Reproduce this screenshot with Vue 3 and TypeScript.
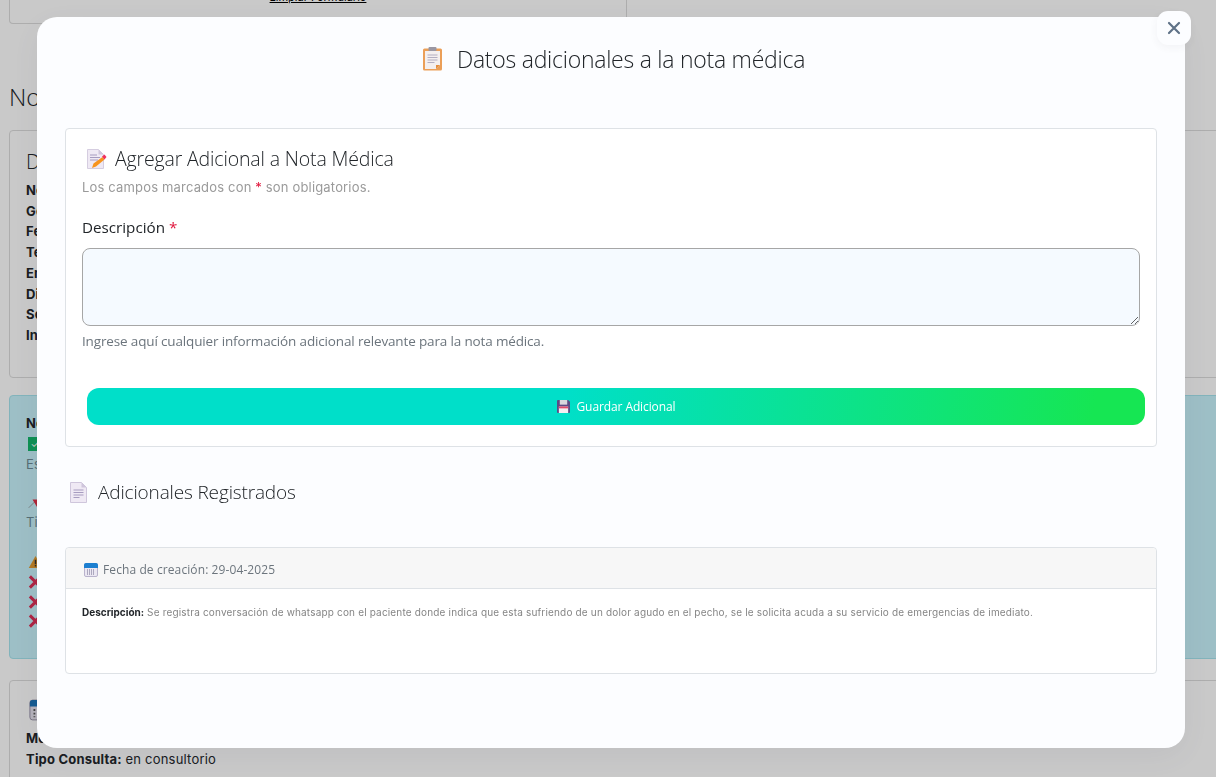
<template>
  <div class="page">
    <!-- pagina detras del modal -->
    <div class="top-row">
      <div class="top-card"><a class="clear-link">Limpiar Formulario</a></div>
    </div>
    <h2 class="page-title">Nota</h2>
    <section class="bg-card patient">
      <h3>Datos</h3>
      <p v-for="row in patientRows" :key="row"><b>{{ row }}</b></p>
    </section>
    <section class="bg-card alert-card">
      <p><b>Nota</b></p>
      <p class="check"><span class="check-box">✓</span></p>
      <p class="soft">Estado</p>
      <svg class="pin" viewBox="0 0 20 20"><path d="M1 19 9 11" stroke="#8a8a8a" stroke-width="1" /><path d="M6 8 13 8 17 1 19 12 12 18Z" fill="#dd2e44" /></svg>
      <p class="soft">Tipo</p>
      <svg class="warn" viewBox="0 0 20 18"><path d="M10 1 19 17H1Z" fill="#e39a2d" /><rect x="9" y="6" width="2" height="6" fill="#333" /><rect x="9" y="13" width="2" height="2" fill="#333" /></svg>
      <svg v-for="n in 3" :key="n" class="cross" viewBox="0 0 16 16"><path d="M2 2 14 14M14 2 2 14" stroke="#dd2e55" stroke-width="3.200" /></svg>
    </section>
    <section class="bg-card consult">
      <svg class="bg-cal" viewBox="0 0 20 24"><rect x="1" y="1" width="18" height="22" rx="3" fill="#e6e3ee" stroke="#8f8aa0" /><path d="M1 8V4a3 3 0 0 1 3-3h12a3 3 0 0 1 3 3v4Z" fill="#1a73b8" /><path d="M6 11v9" stroke="#555" stroke-width="2" stroke-dasharray="2 2" /></svg>
      <p><b>Motivo:</b> consulta</p>
      <p><b>Tipo Consulta:</b> en consultorio</p>
    </section>
  </div>

  <div class="overlay">
    <div class="modal">
      <button class="close" aria-label="Cerrar">
        <svg viewBox="0 0 14 14" width="14" height="14"><path d="M2 2 12 12M12 2 2 12" stroke="#5f7287" stroke-width="2.200" stroke-linecap="round" /></svg>
      </button>

      <h2 class="modal-title">
        <svg class="ico-clip" viewBox="0 0 20 24">
          <rect x="0.500" y="1.500" width="19" height="22" rx="1.500" fill="#eb9f58" />
          <path d="M2.500 4h15v14l-4 4h-11Z" fill="#f4efef" />
          <path d="M17.500 18h-4v4Z" fill="#e58d3c" />
          <rect x="6" y="0" width="8" height="4" rx="1" fill="#9a97a3" />
          <path d="M5 8h10M5 10.500h10M5 13h10M5 15.500h7" stroke="#b3aec2" stroke-width="1" />
        </svg>
        Datos adicionales a la nota médica
      </h2>

      <form class="add-card" @submit.prevent>
        <h3 class="card-title">
          <svg class="ico-memo" viewBox="0 0 20 20">
            <path d="M0.500 0.500h11l5 5v14h-16Z" fill="#efe9f4" stroke="#d5cde0" />
            <path d="M11.500 0.500v5h5Z" fill="#cfc6dc" />
            <path d="M3 6h7M3 8.500h10M3 11h8" stroke="#a79cc0" stroke-width="1" />
            <path d="M5 19 6.500 14.500 15.500 8 17.500 10.500 9 17.500Z" fill="#f7941e" />
            <path d="M15 7.500 17.500 5.500 19.500 8 17.500 10.500Z" fill="#f0315f" />
          </svg>
          Agregar Adicional a Nota Médica
        </h3>
        <p class="required-note">Los campos marcados con <span class="req">*</span> son obligatorios.</p>
        <label class="field-label" for="descripcion">Descripción <span class="req">*</span></label>
        <textarea id="descripcion" v-model="descripcion" class="field"></textarea>
        <p class="help">Ingrese aquí cualquier información adicional relevante para la nota médica.</p>
        <button type="submit" class="save">
          <svg class="ico-save" viewBox="0 0 14 14">
            <path d="M0 1a1 1 0 0 1 1-1h11l2 2v11a1 1 0 0 1-1 1H1a1 1 0 0 1-1-1Z" fill="#5b4a86" />
            <rect x="3" y="0" width="8" height="5" fill="#d8d6de" />
            <rect x="2" y="7" width="10" height="7" fill="#f4eef2" />
            <rect x="2" y="7" width="10" height="2" fill="#e2476b" />
          </svg>
          Guardar Adicional
        </button>
      </form>

      <h3 class="list-title">
        <svg class="ico-doc" viewBox="0 0 17 21">
          <path d="M0.500 0.500h11l5 5v15h-16Z" fill="#efe9f4" stroke="#cfc6dc" />
          <path d="M11.500 0.500v5h5Z" fill="#cfc6dc" />
          <path d="M3.500 8h10M3.500 10.500h10M3.500 13h10M3.500 15.500h6" stroke="#a79cc0" stroke-width="1" />
        </svg>
        Adicionales Registrados
      </h3>

      <article v-for="item in adicionales" :key="item.fecha" class="entry">
        <header class="entry-head">
          <svg class="ico-cal" viewBox="0 0 14 14">
            <rect x="0.500" y="0.500" width="13" height="13" rx="1.500" fill="#ebe7f2" stroke="#b9b3cc" />
            <path d="M0 5V2a2 2 0 0 1 2-2h10a2 2 0 0 1 2 2v3Z" fill="#1c7fd0" />
            <path d="M3 7h8M3 9h8M3 11h8" stroke="#6f6a8c" stroke-width="1" stroke-dasharray="1 1" />
          </svg>
          Fecha de creación: {{ item.fecha }}
        </header>
        <p class="entry-body"><b>Descripción:</b> {{ item.descripcion }}</p>
      </article>
    </div>
  </div>
</template>

<script setup lang="ts">
import { ref } from 'vue'

const descripcion = ref('')

const patientRows = ['Nombre:', 'Género:', 'Fecha:', 'Teléfono:', 'Email:', 'Dirección:', 'Seguro:', 'Ingreso:']

const adicionales = [
  {
    fecha: '29-04-2025',
    descripcion:
      'Se registra conversación de whatsapp con el paciente donde indica que esta sufriendo de un dolor agudo en el pecho, se le solicita acuda a su servicio de emergencias de imediato.',
  },
]
</script>

<style>
html, body {
  margin: 0;
  height: 100%;
  overflow: hidden;
}
</style>

<style scoped>
.page {
  height: 777px;
  overflow: hidden;
  padding: 0 0 0 9px;
  box-sizing: border-box;
  background: #fff;
  font-family: Inter, sans-serif;
  color: #212529;
}

.top-row {
  height: 24px;
  width: 618px;
}

.top-card {
  display: flex;
  justify-content: center;
  height: 24px;
  box-sizing: border-box;
  border: 1px solid #dcdcdc;
  border-top: none;
  border-radius: 0 0 4px 4px;
}

.clear-link {
  margin-top: -10px;
  font-size: 11px;
  line-height: 14px;
  color: #000;
  text-decoration: underline;
}

.page-title {
  margin: 56px 0 16px;
  font: 300 24px/34px "Open Sans", sans-serif;
}

.bg-card {
  width: 1230px;
  border: 1px solid #dcdcdc;
  border-radius: 4px;
  padding: 17px 16px;
  box-sizing: border-box;
}

.bg-card p {
  margin: 0;
  font-size: 13px;
  line-height: 20.700px;
  letter-spacing: 0.2px;
}

.patient {
  height: 248px;
  margin-bottom: 17px;
}

.patient h3 {
  margin: 0 0 4px;
  font: 300 20px/28px "Open Sans", sans-serif;
}

.alert-card {
  height: 264px;
  margin-bottom: 21px;
  background: #c8f3fb;
  border-color: #a5e4ee;
}

.bg-card .check {
  height: 20px;
  line-height: 18px;
}

.soft {
  color: #6c8a94;
}

.check-box {
  display: inline-block;
  width: 14px;
  height: 14px;
  margin-left: 2px;
  background: #12b76a;
  color: #fff;
  font-size: 10px;
  line-height: 14px;
  text-align: center;
}

.pin, .warn, .cross {
  display: block;
  width: 15px;
  height: 16px;
  margin: 3.500px 0 3.500px 2px;
}

.pin {
  margin-top: 19px;
  margin-bottom: 3px;
}

.warn {
  margin-top: 21px;
  margin-bottom: 4px;
}

.bg-cal {
  display: block;
  width: 18px;
  height: 24px;
  margin: 0 0 6px 3px;
}

.overlay {
  position: fixed;
  inset: 0;
  background: rgba(0, 0, 0, 0.21);
}

.modal {
  position: relative;
  margin: 17px 0 0 37px;
  width: 1148px;
  height: 731px;
  box-sizing: border-box;
  padding: 0 28px;
  background: #fcfdff;
  border-radius: 20px;
  box-shadow: 0 8px 32px rgba(60, 70, 90, 0.08);
  font-family: Inter, sans-serif;
}

.close {
  position: absolute;
  top: -6px;
  right: -6px;
  width: 34px;
  height: 34px;
  padding: 0;
  display: flex;
  align-items: center;
  justify-content: center;
  border: none;
  border-radius: 11px;
  background: #fcfdff;
  box-shadow: 0 2px 8px rgba(60, 70, 90, 0.06);
}

.modal-title {
  display: flex;
  align-items: center;
  justify-content: center;
  gap: 13px;
  height: 84px;
  margin: 0 0 27px;
  padding-left: 4px;
  font: 300 23px/32px "Open Sans", sans-serif;
  letter-spacing: -0.25px;
  color: #212529;
}

.ico-clip {
  width: 23px;
  height: 24px;
}

.add-card {
  display: flex;
  flex-direction: column;
  height: 319px;
  box-sizing: border-box;
  padding: 16px;
  background: #fff;
  border: 1px solid #dee2e6;
  border-radius: 4px;
}

.card-title {
  display: flex;
  align-items: center;
  gap: 8px;
  margin: 0 0 0 5px;
  font: 300 19.500px/28px "Open Sans", sans-serif;
  letter-spacing: -0.15px;
  color: #212529;
}

.ico-memo {
  width: 20px;
  height: 20px;
}

.required-note {
  margin: 6px 0 0;
  font-size: 13px;
  line-height: 17px;
  letter-spacing: 0.17px;
  color: #9a9a9a;
}

.req {
  color: #e0163c;
}

.field-label {
  margin-top: 19px;
  font: 400 15.200px/24px "Open Sans", sans-serif;
  color: #212529;
}

.field {
  display: block;
  box-sizing: border-box;
  width: 100%;
  height: 78px;
  margin-top: 9px;
  background: #f5faff;
  border: 1px solid #a6a6a6;
  border-radius: 8px;
  resize: vertical;
}

.help {
  margin: 5px 0 0;
  font: 400 13.500px/20px "Open Sans", sans-serif;
  letter-spacing: -0.15px;
  color: #6c757d;
}

.save {
  display: flex;
  align-items: center;
  justify-content: center;
  gap: 7px;
  width: 1058px;
  height: 37px;
  margin: 37px 0 0 5px;
  border: none;
  border-radius: 12px;
  background: linear-gradient(100deg, #00dfc9 0%, #00dfc9 45%, #16e653 95%);
  color: #fff;
  font: 500 12px/16px "Open Sans", sans-serif;
  letter-spacing: -0.1px;
}

.ico-save {
  width: 13px;
  height: 13px;
}

.list-title {
  display: flex;
  align-items: center;
  gap: 11px;
  height: 28px;
  margin: 31px 0 41px 5px;
  font: 300 19px/28px "Open Sans", sans-serif;
  letter-spacing: -0.15px;
  color: #212529;
}

.ico-doc {
  width: 17px;
  height: 21px;
}

.entry {
  height: 127px;
  box-sizing: border-box;
  background: #fff;
  border: 1px solid #dee2e6;
  border-radius: 4px;
}

.entry-head {
  display: flex;
  align-items: center;
  gap: 5px;
  height: 41px;
  box-sizing: border-box;
  padding: 3px 17px 0 18px;
  background: #f7f7f7;
  border-bottom: 1px solid #dee2e6;
  border-radius: 4px 4px 0 0;
  font: 400 12px/16px "Open Sans", sans-serif;
  letter-spacing: 0.1px;
  color: #6c757d;
}

.ico-cal {
  width: 14px;
  height: 14px;
}

.entry-body {
  margin: 0;
  padding: 16px 16px;
  font-size: 10px;
  line-height: 14px;
  letter-spacing: 0.17px;
  color: #858585;
}

.entry-body b {
  letter-spacing: 0;
  color: #212529;
}
</style>
